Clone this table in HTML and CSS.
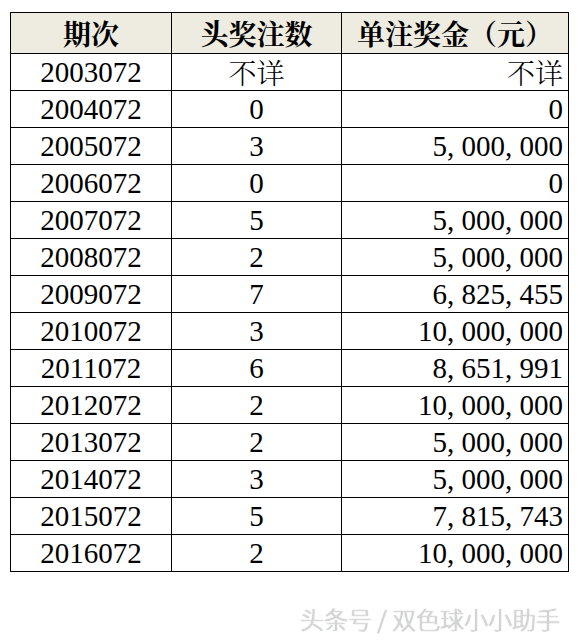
FILE: index.html
```html
<!DOCTYPE html>
<html lang="zh">
<head>
<meta charset="utf-8">
<link rel="stylesheet" href="styles.css">
</head>
<body>
<table class="grid">
  <colgroup><col class="c1"><col class="c2"><col class="c3"></colgroup>
  <thead>
    <tr><th>期次</th><th>头奖注数</th><th>单注奖金（元）</th></tr>
  </thead>
  <tbody>
    <tr><td>2003072</td><td class="cjk">不详</td><td class="num cjk">不详</td></tr>
    <tr><td>2004072</td><td>0</td><td class="num">0</td></tr>
    <tr><td>2005072</td><td>3</td><td class="num">5, 000, 000</td></tr>
    <tr><td>2006072</td><td>0</td><td class="num">0</td></tr>
    <tr><td>2007072</td><td>5</td><td class="num">5, 000, 000</td></tr>
    <tr><td>2008072</td><td>2</td><td class="num">5, 000, 000</td></tr>
    <tr><td>2009072</td><td>7</td><td class="num">6, 825, 455</td></tr>
    <tr><td>2010072</td><td>3</td><td class="num">10, 000, 000</td></tr>
    <tr><td>2011072</td><td>6</td><td class="num">8, 651, 991</td></tr>
    <tr><td>2012072</td><td>2</td><td class="num">10, 000, 000</td></tr>
    <tr><td>2013072</td><td>2</td><td class="num">5, 000, 000</td></tr>
    <tr><td>2014072</td><td>3</td><td class="num">5, 000, 000</td></tr>
    <tr><td>2015072</td><td>5</td><td class="num">7, 815, 743</td></tr>
    <tr><td>2016072</td><td>2</td><td class="num">10, 000, 000</td></tr>
  </tbody>
</table>
<div class="mark">头条号 / 双色球小小助手</div>
</body>
</html>
```
FILE: styles.css
```css
html, body {
  margin: 0;
  padding: 0;
  background: #ffffff;
}
body {
  padding: 12px 0 0 10px;
}
.grid {
  border-collapse: collapse;
  table-layout: fixed;
  width: 558px;
  font-family: "Liberation Serif", "Noto Serif CJK SC", "Noto Sans CJK SC", serif;
  font-size: 29px;
  color: #000;
}
.c1 { width: 161px; }
.c2 { width: 170px; }
.c3 { width: 227px; }
.grid th, .grid td {
  border: 1px solid #000;
  padding: 0;
  text-align: center;
  white-space: nowrap;
}
.grid th {
  background: #eeece1;
  height: 40px;
  font-family: "Noto Serif CJK SC", "Noto Sans CJK SC", serif;
  font-size: 28px;
  font-weight: bold;
  line-height: 40px;
}
.grid td {
  height: 36px;
  line-height: 36px;
}
.grid td.cjk {
  font-family: "Noto Serif CJK SC", "Noto Sans CJK SC", serif;
  font-size: 28px;
  font-weight: 300;
}
.grid td.num {
  text-align: right;
  padding-right: 5px;
}
.mark {
  width: 550px;
  margin-top: 29px;
  text-align: right;
  font-family: "Noto Sans CJK SC", sans-serif;
  font-size: 24px;
  font-weight: 300;
  color: #dadada;
  text-shadow: 0 0 1px #9a9a9a;
}
```
